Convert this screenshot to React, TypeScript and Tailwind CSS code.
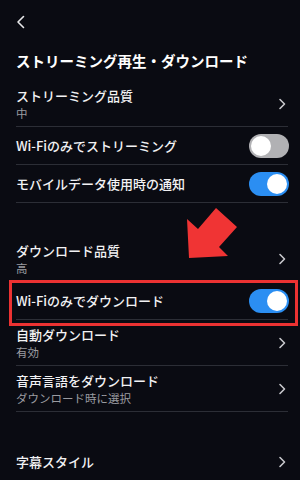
import type { ReactNode } from "react";

const FONT = "font-['Noto_Sans_CJK_JP','Noto_Sans',sans-serif]";

function Chevron() {
  return (
    <svg className="w-[8px] h-[12px] mr-[2px] text-[#c8c8cc] flex-shrink-0" viewBox="0 0 8 12" fill="none" stroke="currentColor">
      <path d="M2 1.5l4.5 4.5L2 10.5" strokeWidth={1.6} strokeLinecap="round" strokeLinejoin="round" />
    </svg>
  );
}

function Toggle({ on }: { on: boolean }) {
  return (
    <span
      className={`w-[40px] h-[24px] -mr-[1px] rounded-full flex items-center px-[2px] flex-shrink-0 ${
        on ? "bg-[#2b8ef2] justify-end" : "bg-[#b1b1b4] justify-start"
      }`}
    >
      <span className="w-[20px] h-[20px] rounded-full bg-white" />
    </span>
  );
}

function Row({
  title,
  sub,
  right,
}: {
  title: string;
  sub?: string;
  right: ReactNode;
}) {
  return (
    <div
      className={`flex items-center justify-between border-b border-[#2c2e36] ${
        sub ? "h-[46px]" : "h-[38px]"
      }`}
    >
      <div className="flex flex-col">
        <span className="text-[13px] leading-[18px] font-medium text-[#f2f2f4]">{title}</span>
        {sub && <span className="text-[11.5px] leading-[16px] text-[#9a9ba0]">{sub}</span>}
      </div>
      <div className="flex items-center">{right}</div>
    </div>
  );
}

export default function App() {
  return (
    <div className={`relative w-[300px] h-[480px] overflow-hidden bg-[#0a0b12] ${FONT}`}>
      <div className="pl-4 pr-3">
        {/* Back */}
        <div className="h-[44px] flex items-center">
          <svg className="w-[10px] h-[14px] text-[#e8e8ea]" viewBox="0 0 10 14" fill="none" stroke="currentColor">
            <path d="M7.5 1.5L2 7l5.5 5.5" strokeWidth={1.6} strokeLinecap="round" strokeLinejoin="round" />
          </svg>
        </div>

        <h1 className="mt-[6px] mb-[9px] text-[14.5px] leading-[22px] font-bold text-white">
          ストリーミング再生・ダウンロード
        </h1>

        <Row title="ストリーミング品質" sub="中" right={<Chevron />} />
        <Row title="Wi-Fiのみでストリーミング" right={<Toggle on={false} />} />
        <Row title="モバイルデータ使用時の通知" right={<Toggle on />} />

        <div className="h-[33px]" />

        <Row title="ダウンロード品質" sub="高" right={<Chevron />} />
        <Row title="Wi-Fiのみでダウンロード" right={<Toggle on />} />
        <Row title="自動ダウンロード" sub="有効" right={<Chevron />} />
        <Row title="音声言語をダウンロード" sub="ダウンロード時に選択" right={<Chevron />} />

        <div className="h-[31px]" />

        <Row title="字幕スタイル" right={<Chevron />} />
      </div>

      {/* Highlight box */}
      <div className="absolute left-[9px] top-[280px] w-[289px] h-[46px] border-[3px] border-[#ec3232]" />

      {/* Arrow */}
      <svg className="absolute left-0 top-0 w-[300px] h-[480px] pointer-events-none" viewBox="0 0 300 480">
        <polygon
          points="189,258 187,219 198,229 216,208 237,227 219,247 228,256"
          fill="#f03434"
        />
      </svg>
    </div>
  );
}
